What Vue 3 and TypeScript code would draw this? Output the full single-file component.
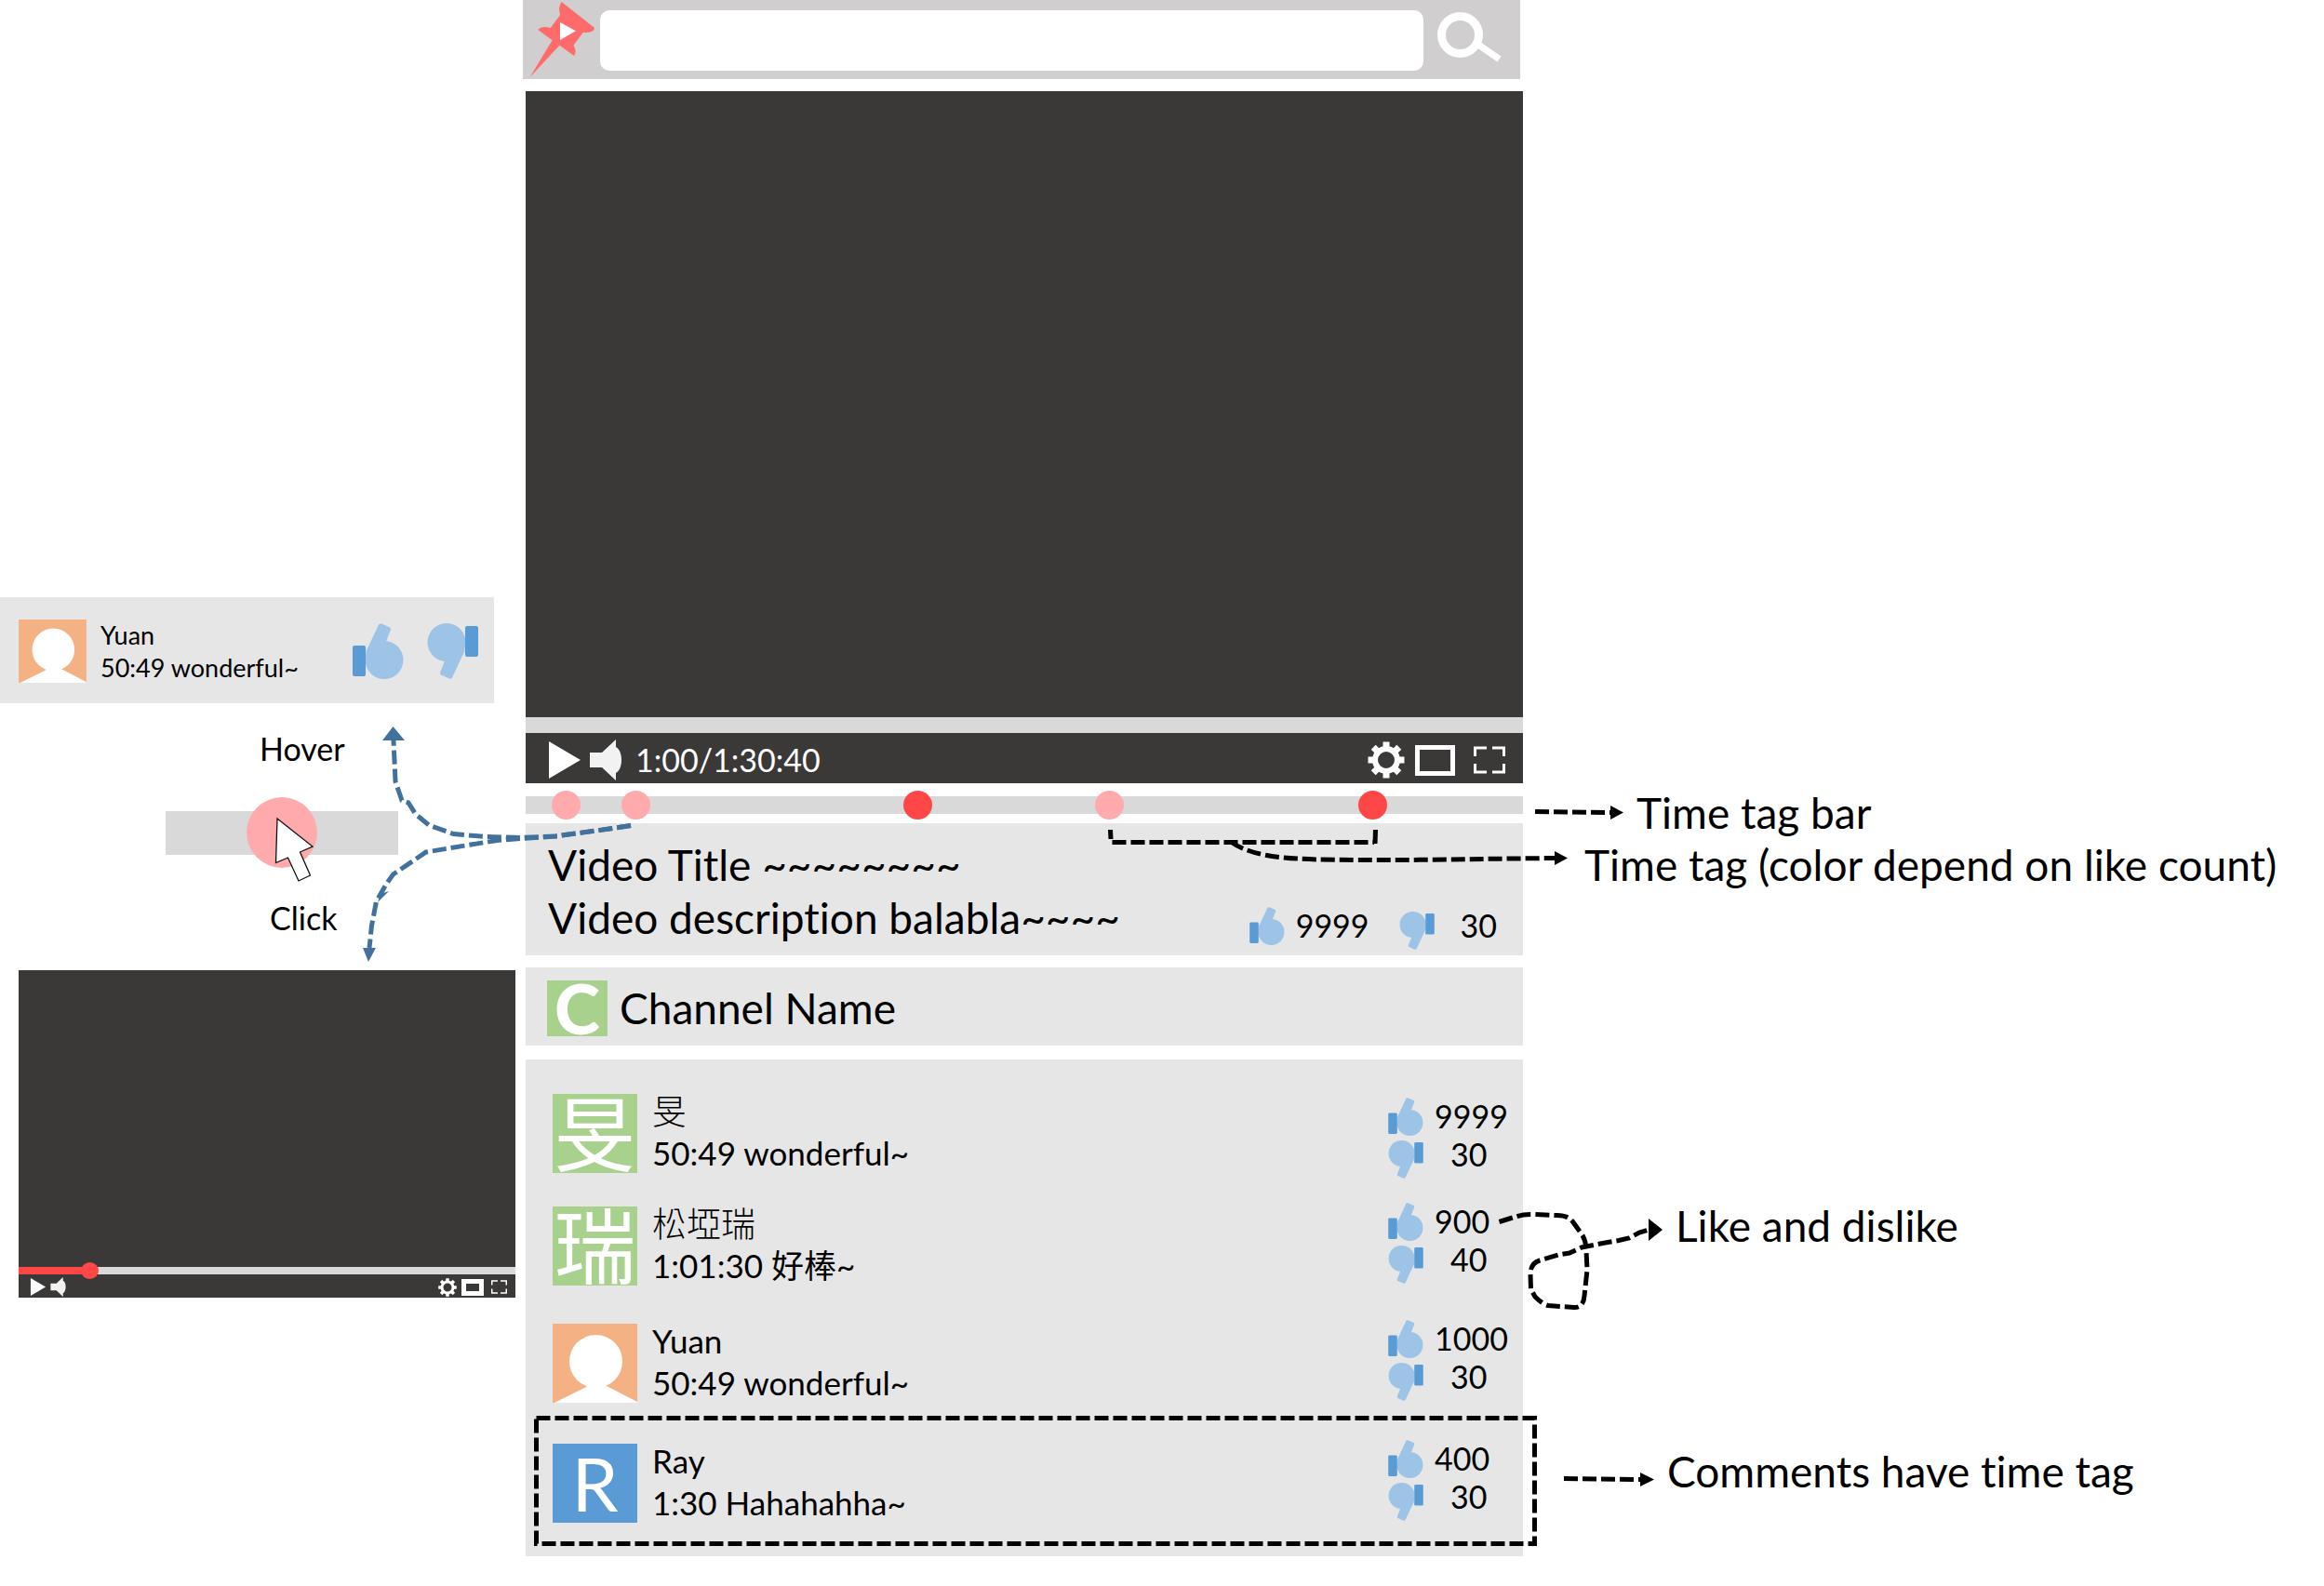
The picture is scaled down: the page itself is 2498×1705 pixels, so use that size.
<script setup lang="ts">
import { ref } from 'vue'

interface TimeTag {
  at: number
  hot: boolean
  label: string
}

interface Comment {
  name: string
  text: string
  avatar: string
  kind: 'green' | 'blue' | 'person'
  likes: number
  dislikes: number
}

const query = ref('')
const position = ref(0)
const miniPosition = ref(13)

const tags: TimeTag[] = [
  { at: 4, hot: false, label: '3:30' },
  { at: 11, hot: false, label: '10:00' },
  { at: 39.3, hot: true, label: '35:40' },
  { at: 58.5, hot: false, label: '50:49' },
  { at: 84.9, hot: true, label: '1:17:00' },
]

const comments: Comment[] = [
  { name: '旻', text: '50:49 wonderful~', avatar: '旻', kind: 'green', likes: 9999, dislikes: 30 },
  { name: '松埡瑞', text: '1:01:30 好棒~', avatar: '瑞', kind: 'green', likes: 900, dislikes: 40 },
  { name: 'Yuan', text: '50:49 wonderful~', avatar: '', kind: 'person', likes: 1000, dislikes: 30 },
  { name: 'Ray', text: '1:30 Hahahahha~', avatar: 'R', kind: 'blue', likes: 400, dislikes: 30 },
]
</script>

<template>
  <div class="page">
    <svg class="defs" aria-hidden="true">
      <symbol id="thumb" viewBox="0 0 55 60">
        <circle cx="34" cy="39.500" r="20.500" fill="#9dc3e6" />
        <path d="M28 1.500Q29 0 31 .5L40 4.500Q41.500 5.500 41 7L36 19.500L34 40L14.500 34V30L18 23Z" fill="#9dc3e6" />
        <rect x="0" y="24" width="14" height="33" rx="2" fill="#5b9bd5" />
      </symbol>
      <symbol id="play" viewBox="0 0 34 40"><path d="M0 0L34 20L0 40Z" fill="#fff" /></symbol>
      <symbol id="speaker" viewBox="0 0 34 44">
        <path d="M0 14H13L28 0V8C36 12 36 32 28 36V44L13 30H0Z" fill="#f2f2f2" />
      </symbol>
      <symbol id="gear" viewBox="-20 -20 40 40">
        <circle r="12" fill="none" stroke="#fff" stroke-width="6" />
        <g fill="#fff">
          <rect v-for="n in 8" :key="n" x="-3.500" y="-19.500" width="7" height="8" :transform="`rotate(${n * 45})`" />
        </g>
      </symbol>
      <symbol id="full" viewBox="0 0 34 30">
        <path d="M1.500 11V2H14M20 2H32.500V11M32.500 19V28H20M14 28H1.500V19" fill="none" stroke="#fff" stroke-width="3" />
      </symbol>
      <symbol id="person" viewBox="0 0 91 85">
        <rect width="91" height="85" fill="#f4b183" />
        <circle cx="46.500" cy="40.500" r="28.500" fill="#fff" />
        <path d="M36 68L46 60L58 67L91 84V85H2Z" fill="#fff" />
      </symbol>
    </svg>

    <aside class="left">
      <article class="hover-card">
        <svg class="small-avatar" role="img" aria-label="Yuan"><use href="#person" /></svg>
        <div class="small-text">
          <div>Yuan</div>
          <div>50:49 wonderful~</div>
        </div>
        <button class="plain big-up" aria-label="Like"><svg><use href="#thumb" /></svg></button>
        <button class="plain flip" aria-label="Dislike"><svg><use href="#thumb" /></svg></button>
      </article>

      <div class="gesture">
        <div class="gesture-label hover-label">Hover</div>
        <div class="zoomed-bar">
          <span class="zoomed-tag"></span>
          <svg class="cursor" viewBox="0 0 44 70" aria-hidden="true">
            <path d="M3 1L41 31L27.500 37L38.500 62L26 68L14.500 43L1.500 48.500Z" fill="#fff" stroke="#111" stroke-width="1.300" />
          </svg>
        </div>
        <div class="gesture-label click-label">Click</div>
      </div>

      <section class="mini">
        <div class="mini-screen"></div>
        <input
          v-model.number="miniPosition"
          class="mini-seek"
          type="range"
          min="0"
          max="100"
          aria-label="Preview position"
          :style="{ '--played': miniPosition + 1 + '%' }"
        />
        <div class="mini-controls">
          <button class="plain" aria-label="Play preview"><svg class="m-play"><use href="#play" /></svg></button>
          <button class="plain" aria-label="Preview volume"><svg class="m-speaker"><use href="#speaker" /></svg></button>
          <button class="plain push" aria-label="Preview settings"><svg class="m-gear"><use href="#gear" /></svg></button>
          <button class="plain m-wide" aria-label="Preview wide view"></button>
          <button class="plain" aria-label="Preview full screen"><svg class="m-full"><use href="#full" /></svg></button>
        </div>
      </section>
    </aside>

    <main class="center">
      <header class="top">
        <svg class="pin" viewBox="0 0 83 85" role="img" aria-label="Home">
          <path
            d="M41.600 1L76.500 28.500Q78 30 75 32.500Q71.500 34.500 64.800 33.700L54.400 47.700Q58.500 53 55.100 59L39.400 47.700L7.600 82L31.600 42.300L16.200 31Q20 26.500 29.800 29L40.100 15Q37.500 7 41.600 1Z"
            fill="#ff6b6b"
          />
          <path d="M40 23L57 32.300L40 42Z" fill="#fff" />
        </svg>
        <input v-model="query" class="search" type="text" aria-label="Search" />
        <button class="plain" aria-label="Search videos">
          <svg class="lens" viewBox="0 0 70 58">
            <circle cx="24.500" cy="28.500" r="20" fill="none" stroke="#fff" stroke-width="9" />
            <path d="M44 39L66.500 54.500" stroke="#fff" stroke-width="7" />
          </svg>
        </button>
      </header>

      <section class="player">
        <div class="screen"></div>
        <input v-model.number="position" class="seek" type="range" min="0" max="100" aria-label="Position" />
        <div class="controls">
          <button class="plain" aria-label="Play"><svg class="c-play"><use href="#play" /></svg></button>
          <button class="plain c-sound" aria-label="Volume"><svg class="c-speaker"><use href="#speaker" /></svg></button>
          <span class="time">1:00/1:30:40</span>
          <button class="plain push" aria-label="Settings"><svg class="c-gear"><use href="#gear" /></svg></button>
          <button class="plain c-wide" aria-label="Wide view"></button>
          <button class="plain" aria-label="Full screen"><svg class="c-full"><use href="#full" /></svg></button>
        </div>
      </section>

      <nav class="tag-bar" aria-label="Time tags">
        <button
          v-for="tag in tags"
          :key="tag.at"
          class="plain tag"
          :class="{ hot: tag.hot }"
          :style="{ left: tag.at + '%' }"
          :aria-label="tag.label"
        ></button>
      </nav>

      <section class="panel about">
        <h1>Video Title ~~~~~~~~</h1>
        <div class="about-row">
          <p>Video description balabla~~~~</p>
          <div class="about-votes">
            <button class="plain vote"><svg class="thumb"><use href="#thumb" /></svg><span>9999</span></button>
            <button class="plain vote down"><svg class="thumb turned"><use href="#thumb" /></svg><span>30</span></button>
          </div>
        </div>
      </section>

      <section class="panel channel">
        <span class="channel-avatar" aria-hidden="true">C</span>
        <h2>Channel Name</h2>
      </section>

      <ul class="panel comments">
        <li v-for="c in comments" :key="c.name" class="comment">
          <svg v-if="c.kind === 'person'" class="avatar" aria-hidden="true"><use href="#person" /></svg>
          <span v-else class="avatar" :class="[c.kind, { cjk: c.kind === 'green' }]" aria-hidden="true">{{ c.avatar }}</span>
          <div class="body">
            <div :class="{ 'cjk-name': c.kind === 'green' }">{{ c.name }}</div>
            <div>{{ c.text }}</div>
          </div>
          <div class="votes">
            <button class="plain vote"><svg class="thumb"><use href="#thumb" /></svg><span>{{ c.likes }}</span></button>
            <button class="plain vote down"><svg class="thumb turned"><use href="#thumb" /></svg><span>{{ c.dislikes }}</span></button>
          </div>
        </li>
      </ul>
    </main>

    <aside class="right">
      <p class="note-bar">Time tag bar</p>
      <p class="note-tag">Time tag (color depend on like count)</p>
      <p class="note-like">Like and dislike</p>
      <p class="note-comment">Comments have time tag</p>
    </aside>

    <!-- connectors between the mock-up and its notes -->
    <svg class="connectors" viewBox="0 0 2498 1705" aria-hidden="true">
      <g fill="none" stroke="#000" stroke-width="5" stroke-dasharray="15 5">
        <path d="M576.500 1524.500H1649.500V1659.500H576.500Z" />
        <path d="M1650 872.500L1732 873.500" />
        <path d="M1193.500 892L1194 902" />
        <path d="M1195.500 905.500H1477" />
        <path d="M1478.500 892L1478 907" />
        <path d="M1323 905C1350 924 1395 924 1460 924.500C1530 925 1600 923 1672 922.500" />
        <path d="M1681 1589.500L1764 1590.500" />
        <path
          d="M1611.500 1313.500L1629 1308Q1638 1305 1650 1305.500L1672 1306.500Q1686 1306 1691 1314L1701 1328Q1705 1335 1705 1345L1706 1365L1703 1393Q1702 1406 1692 1405.500L1664 1403.500Q1658 1402 1650 1394L1645.500 1386L1645 1370Q1645 1358 1655 1355L1675 1349L1687 1347L1700 1341L1720 1337L1740 1333.500L1751 1331L1762 1325L1772 1322"
        />
      </g>
      <g>
        <path d="M1731 866L1745 873.500L1731 881Z" />
        <path d="M1671 915L1685 922.500L1671 930Z" />
        <path d="M1763 1583L1778 1590.500L1763 1598Z" />
        <path d="M1772 1310L1787 1322L1772 1334Z" />
      </g>
      <g fill="none" stroke="#41719c" stroke-width="5" stroke-dasharray="15 5">
        <path d="M678 887.500L641 893L597 899L560 900.500L523 899.500L487.500 896.500L461 887L446.500 875L439 863L432 860.500L425 840L423 796" />
        <path d="M678 887.500L641 893L597 899L560 901.500L534 903.500L500 909L458 916L422.500 940L415.500 950L404.500 969L399.500 995L397 1019" />
      </g>
      <g fill="#41719c">
        <path d="M422.500 781L435 796H411Z" />
        <path d="M390 1019H404L396 1034Z" />
        <path d="M409 961L418 958L406 970Z" />
      </g>
    </svg>
  </div>
</template>

<style>
body {
  margin: 0;
  background: #fff;
}
</style>

<style scoped>
.page {
  position: relative;
  display: grid;
  grid-template-columns: 565fr 1072fr 861fr;
  padding-bottom: 32px;
  font-family: Lato, "Noto Sans CJK TC", sans-serif;
  font-size: 34px;
  font-variant-ligatures: none;
  line-height: 40px;
  color: #000;
}
.page * {
  box-sizing: border-box;
}
svg {
  display: block;
  overflow: visible;
}
.defs {
  position: absolute;
  width: 0;
  height: 0;
}
.connectors {
  position: absolute;
  top: 0;
  left: 0;
  width: 100%;
  pointer-events: none;
}
h1,
h2,
p,
ul {
  margin: 0;
  padding: 0;
  font-weight: 400;
}
.plain {
  display: block;
  padding: 0;
  border: 0;
  background: none;
  color: inherit;
  font: inherit;
  cursor: pointer;
}
.push {
  margin-left: auto;
}

/* left column */
.left {
  padding-top: 642px;
}
.hover-card {
  display: flex;
  align-items: center;
  height: 114px;
  margin-right: 34px;
  padding: 2px 17px 0 20px;
  background: #e6e6e6;
}
.small-avatar {
  width: 73px;
  height: 68px;
}
.small-text {
  margin-left: 15px;
  font-size: 27px;
  line-height: 35px;
  white-space: nowrap;
}
.big-up {
  margin-left: auto;
  margin-right: 25px;
}
.hover-card button svg {
  width: 55px;
  height: 60px;
}
.flip svg,
.turned {
  transform: rotate(180deg);
}
.gesture {
  width: 250px;
  margin: 29px 0 36px 178px;
}
.hover-label {
  padding-left: 101px;
}
.click-label {
  padding-left: 112px;
}
.zoomed-bar {
  position: relative;
  height: 47px;
  margin: 47px 0 48px;
  background: #d9d9d9;
}
.zoomed-tag {
  position: absolute;
  left: 87px;
  top: -15px;
  width: 76px;
  height: 76px;
  border-radius: 50%;
  background: #ffaaad;
}
.cursor {
  position: absolute;
  left: 117px;
  top: 7px;
  width: 44px;
  height: 70px;
}
.mini {
  margin: 0 11px 0 20px;
  background: #3b3937;
}
.mini-screen {
  aspect-ratio: 534 / 319;
}
.mini-seek,
.seek {
  display: block;
  width: 100%;
  margin: 0;
  appearance: none;
  background: #d9d9d9;
}
.mini-seek {
  height: 8px;
  background: linear-gradient(to right, #ff4747 var(--played), #d9d9d9 var(--played));
}
.mini-seek::-webkit-slider-thumb {
  appearance: none;
  width: 19px;
  height: 18px;
  border: 0;
  border-radius: 50%;
  background: #ff4747;
}
.mini-controls {
  display: flex;
  align-items: center;
  height: 25px;
  padding: 2px 9px 0 12px;
}
.m-play {
  width: 18px;
  height: 19px;
  margin-right: 4px;
}
.m-speaker {
  width: 17px;
  height: 21px;
}
.m-gear {
  width: 20px;
  height: 20px;
}
.m-wide {
  width: 24px;
  height: 18px;
  margin: 0 8px 0 5px;
  border: 5px solid #fff;
}
.m-full {
  width: 17px;
  height: 15px;
}

/* centre column */
.top {
  display: flex;
  align-items: center;
  height: 85px;
  margin: 0 3px 13px -3px;
  padding-top: 2px;
  background: #d0cece;
}
.pin {
  flex: none;
  width: 83px;
  height: 85px;
}
.search {
  flex: 1;
  min-width: 0;
  height: 65px;
  padding: 0 16px;
  border: 0;
  border-radius: 10px;
  background: #fff;
  font: inherit;
}
.lens {
  width: 70px;
  height: 58px;
  margin: 0 19px 12px 15px;
}
.player {
  background: #3b3937;
}
.screen {
  aspect-ratio: 1072 / 673;
}
.seek {
  height: 17px;
}
.seek::-webkit-slider-thumb {
  appearance: none;
  width: 0;
  height: 17px;
}
.controls {
  display: flex;
  align-items: center;
  height: 54px;
  padding: 4px 19px 0 25px;
  color: #fff;
}
.c-play {
  width: 34px;
  height: 40px;
}
.c-sound {
  margin: 0 15px 0 10px;
}
.c-speaker {
  width: 34px;
  height: 44px;
}
.c-gear {
  width: 40px;
  height: 40px;
}
.c-wide {
  width: 43px;
  height: 33px;
  margin: 0 20px 0 11px;
  border: 5px solid #fff;
}
.c-full {
  width: 34px;
  height: 30px;
}
.tag-bar {
  position: relative;
  height: 19px;
  margin: 14px 0 10px;
  background: #d9d9d9;
}
.tag {
  position: absolute;
  top: -6px;
  width: 31px;
  height: 31px;
  margin-left: -15px;
  border-radius: 50%;
  background: #ffaaad;
}
.tag.hot {
  background: #ff4747;
}
.panel {
  background: #e6e6e6;
}
.about {
  padding: 16px 28px 6px 24px;
}
h1,
.about p {
  font-size: 46px;
  line-height: 57px;
  white-space: nowrap;
}
.about-row {
  display: flex;
  align-items: flex-end;
  justify-content: space-between;
}
.about-row p {
  align-self: flex-start;
}
.about-votes {
  display: flex;
  align-items: flex-start;
  gap: 32px;
  padding-top: 17px;
}
.vote {
  display: flex;
  align-items: flex-start;
  gap: 12px;
}
.thumb {
  width: 38px;
  height: 41px;
}
.down .thumb {
  margin-top: 5px;
}
.about-votes .down {
  gap: 28px;
}
.channel {
  display: flex;
  align-items: center;
  gap: 13px;
  margin: 13px 0 15px;
  padding: 14px 23px 10px;
}
.channel-avatar {
  width: 65px;
  height: 60px;
  background: #a9d18e;
  color: #fff;
  font-size: 74px;
  font-weight: 900;
  line-height: 60px;
  text-align: center;
}
h2 {
  font-size: 46px;
  line-height: 52px;
}
.comments {
  display: grid;
  grid-template-rows: 121px 126px 129px 90px;
  padding: 33px 18px 35px 29px;
  list-style: none;
}
.comment {
  display: flex;
  align-items: flex-start;
}
.avatar {
  width: 91px;
  height: 85px;
  margin-top: 4px;
  color: #fff;
  font-size: 80px;
  line-height: 85px;
  text-align: center;
}
.green {
  background: #a9d18e;
}
.blue {
  background: #5b9bd5;
}
.cjk {
  font-size: 88px;
}
.body {
  margin-left: 16px;
  font-size: 35px;
  line-height: 45px;
}
.cjk-name {
  font-size: 37px;
  font-weight: 300;
}
.votes {
  display: grid;
  width: 127px;
  margin-left: auto;
}
.comment:first-child .votes {
  margin-top: 8px;
}
.votes .down {
  gap: 29px;
}

/* right column */
.right {
  padding-top: 848px;
  font-size: 46px;
  line-height: 52px;
  white-space: nowrap;
}
.note-bar {
  margin-left: 122px;
}
.note-tag {
  margin: 4px 0 336px 66px;
}
.note-like {
  margin-left: 164px;
}
.note-comment {
  margin: 212px 0 0 155px;
}
</style>
